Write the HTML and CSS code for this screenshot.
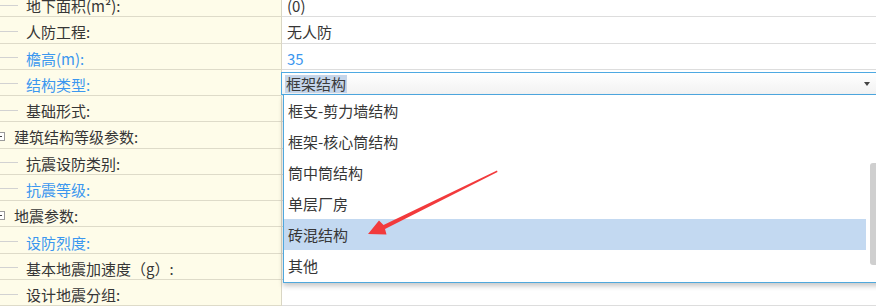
FILE: index.html
```html
<!DOCTYPE html>
<html lang="zh">
<head>
<meta charset="utf-8">
<link rel="stylesheet" href="styles.css">
</head>
<body>
<div class="grid">
  <div class="row"><div class="name child"><span class="tick"></span><span>地下面积(m²):</span></div><div class="val">(0)</div></div>
  <div class="row"><div class="name child"><span class="tick"></span><span>人防工程:</span></div><div class="val">无人防</div></div>
  <div class="row"><div class="name child blue"><span class="tick"></span><span>檐高(m):</span></div><div class="val blue">35</div></div>
  <div class="row"><div class="name child blue"><span class="tick"></span><span>结构类型:</span></div>
    <div class="val combo-cell">
      <div class="combo"><span class="sel">框架结构</span><span class="caret"></span></div>
    </div>
  </div>
  <div class="row"><div class="name child"><span class="tick"></span><span>基础形式:</span></div><div class="val"></div></div>
  <div class="row"><div class="name group"><span class="box"></span><span>建筑结构等级参数:</span></div><div class="val"></div></div>
  <div class="row"><div class="name child"><span class="tick"></span><span>抗震设防类别:</span></div><div class="val"></div></div>
  <div class="row"><div class="name child blue"><span class="tick"></span><span>抗震等级:</span></div><div class="val"></div></div>
  <div class="row"><div class="name group"><span class="box"></span><span>地震参数:</span></div><div class="val"></div></div>
  <div class="row"><div class="name child blue"><span class="tick"></span><span>设防烈度:</span></div><div class="val"></div></div>
  <div class="row"><div class="name child"><span class="tick"></span><span>基本地震加速度（g）:</span></div><div class="val"></div></div>
  <div class="row"><div class="name child"><span class="tick"></span><span>设计地震分组:</span></div><div class="val"></div></div>
</div>

<div class="list">
  <div class="items">
    <div class="item">框支-剪力墙结构</div>
    <div class="item">框架-核心筒结构</div>
    <div class="item">筒中筒结构</div>
    <div class="item">单层厂房</div>
    <div class="item hot">砖混结构</div>
    <div class="item">其他</div>
  </div>
  <div class="scroll"><div class="thumb"></div></div>
</div>

<svg class="arrow" width="876" height="306" viewBox="0 0 876 306">
  <polygon points="497,170.5 383.5,225 379,220.5 368,234 386.5,234.5 385,229 497.5,172" fill="#f23a3c"/>
</svg>
</body>
</html>
```

FILE: styles.css
```css
html, body {
  margin: 0;
  padding: 0;
  width: 876px;
  height: 306px;
  overflow: hidden;
  background: #ffffff;
  font-family: "Noto Sans CJK SC", "Noto Sans", sans-serif;
  font-size: 15px;
  color: #363636;
}

.grid {
  margin-top: -9px;
  display: flex;
  flex-direction: column;
}

.row {
  display: flex;
  height: 26.27px;
  box-sizing: border-box;
}

.name {
  width: 282px;
  flex: none;
  box-sizing: border-box;
  background: #fefce9;
  border-bottom: 1px solid #dedbc9;
  border-right: 1px solid #d9d6c4;
  display: flex;
  align-items: center;
  padding-top: 4px;
  position: relative;
  white-space: nowrap;
}

.child { padding-left: 26px; }
.group { padding-left: 14px; }

.tick {
  position: absolute;
  left: 0;
  top: 50%;
  width: 18px;
  height: 1px;
  background: #d2d2d2;
  margin-top: 1px;
}

.box {
  position: absolute;
  left: -4px;
  top: 50%;
  width: 9px;
  height: 9px;
  margin-top: -3px;
  box-sizing: border-box;
  border: 1px solid #9a9a9a;
  background: #ffffff;
}
.box::after {
  content: "";
  position: absolute;
  left: 1px;
  top: 3px;
  width: 4px;
  height: 1px;
  background: #444;
}

.blue { color: #3b97ef; }

.val {
  flex: 1;
  box-sizing: border-box;
  border-bottom: 1px solid #dddddd;
  display: flex;
  align-items: center;
  padding-left: 5px;
  padding-top: 4px;
  white-space: nowrap;
}

.combo-cell {
  padding: 0;
  margin-left: -1px;
  align-items: stretch;
  position: relative;
}

.combo {
  position: absolute;
  left: 0;
  right: -2px;
  top: 2px;
  height: 23px;
  box-sizing: border-box;
  border: 1px solid #4ea9e2;
  background: linear-gradient(#ffffff, #f2f2f2);
  display: flex;
  align-items: center;
  padding-left: 3px;
  padding-top: 1px;
}

.sel {
  background: #c5d5ea;
  color: #3a3a3a;
  padding: 0 1px;
  line-height: 18px;
}

.caret {
  position: absolute;
  right: 7px;
  top: 9px;
  width: 0;
  height: 0;
  border-left: 3.5px solid transparent;
  border-right: 3.5px solid transparent;
  border-top: 4px solid #444;
}

.list {
  position: absolute;
  left: 283px;
  top: 95px;
  width: 600px;
  height: 188px;
  box-sizing: border-box;
  border: 1px solid #4fa8dc;
  border-top: none;
  background: #ffffff;
  box-shadow: 0 3px 5px rgba(0, 0, 0, 0.22);
  display: flex;
}

.items {
  width: 582px;
  display: flex;
  flex-direction: column;
}

.item {
  height: 31px;
  display: flex;
  align-items: center;
  padding-left: 4px;
  padding-top: 0;
  box-sizing: border-box;
  color: #363636;
  white-space: nowrap;
}

.item.hot { background: #c3d9f1; }

.scroll {
  position: relative;
  flex: 1;
}

.thumb {
  position: absolute;
  left: 4px;
  top: 68px;
  width: 12px;
  height: 102px;
  border-radius: 3px;
  background: #cfcfcf;
}

.arrow {
  position: absolute;
  left: 0;
  top: 0;
  pointer-events: none;
}
```
